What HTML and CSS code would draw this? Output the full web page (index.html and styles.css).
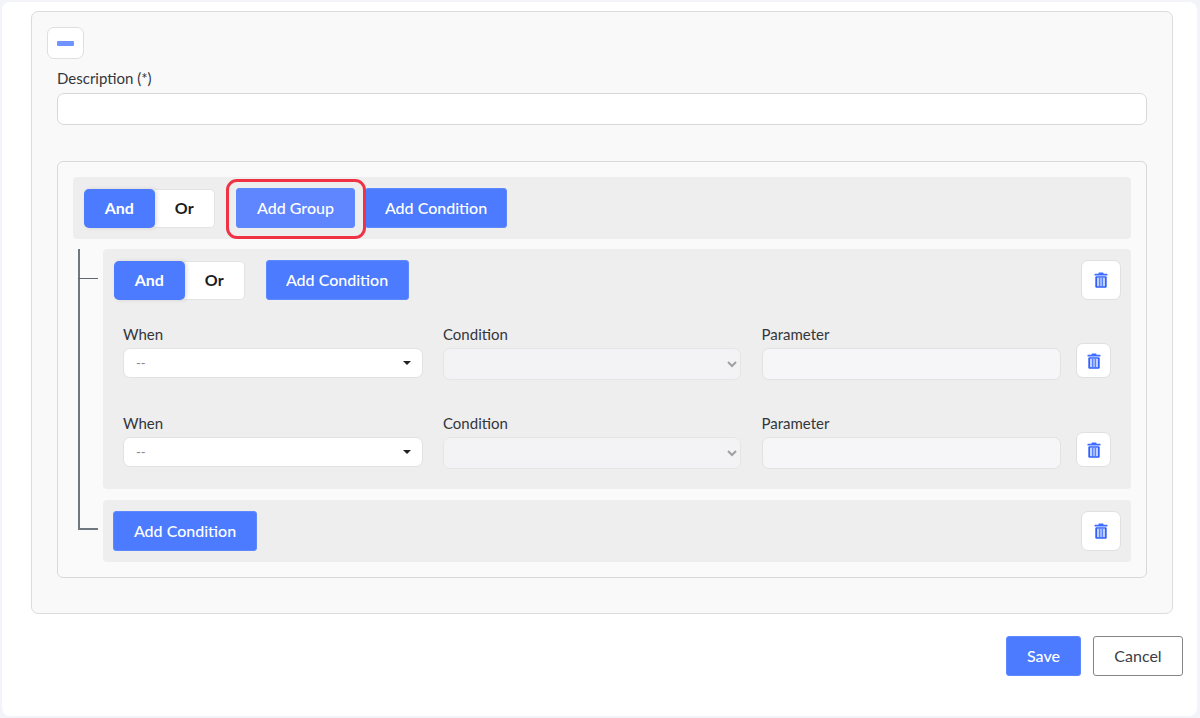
FILE: index.html
```html
<!DOCTYPE html>
<html lang="en">
<head>
<meta charset="utf-8">
<title>Rule editor</title>
<link rel="stylesheet" href="styles.css">
</head>
<body>
<svg class="sprite" width="0" height="0" aria-hidden="true">
  <symbol id="trash" viewBox="0 0 14 16">
    <rect x="4.500" y="0.400" width="5" height="1.800" rx=".6" fill="#3f6cff"/>
    <rect x="0.500" y="1.800" width="13" height="1.700" rx=".5" fill="#3f6cff"/>
    <rect x="1.300" y="4.300" width="11.400" height="11.400" rx="1.200" fill="#2f60ff"/>
    <rect x="3" y="5.600" width="8" height="8.600" fill="#c3d1ff"/>
    <rect x="5.100" y="5.600" width="1.200" height="8.600" fill="#4c78ff"/>
    <rect x="7.700" y="5.600" width="1.200" height="8.600" fill="#4c78ff"/>
  </symbol>
</svg>
<main class="card">
  <section class="panel">
    <button class="collapse" type="button" aria-label="Collapse"><span class="minus"></span></button>
    <div class="desc">
      <label class="label">Description (*)</label>
      <input class="text-input" type="text">
    </div>
    <div class="builder">
      <div class="bar bar-root">
        <div class="toggle"><button class="toggle-on" type="button">And</button><button class="toggle-off" type="button">Or</button></div>
        <span class="highlighted"><button class="btn btn-hover" type="button">Add Group</button><span class="ring"></span></span>
        <button class="btn btn-join" type="button">Add Condition</button>
      </div>
      <div class="children">
        <div class="group node">
          <div class="group-head">
            <div class="toggle"><button class="toggle-on" type="button">And</button><button class="toggle-off" type="button">Or</button></div>
            <button class="btn btn-tall" type="button">Add Condition</button>
            <button class="icon-btn push" type="button" aria-label="Delete"><svg class="ico"><use href="#trash"/></svg></button>
          </div>
          <div class="rule">
            <div class="field"><label class="label">When</label><div class="pick"><span>--</span><i class="caret"></i></div></div>
            <div class="field"><label class="label">Condition</label><select class="native" disabled><option></option></select></div>
            <div class="field"><label class="label">Parameter</label><input class="param" type="text" disabled></div>
            <button class="icon-btn small" type="button" aria-label="Delete"><svg class="ico"><use href="#trash"/></svg></button>
          </div>
          <div class="rule">
            <div class="field"><label class="label">When</label><div class="pick"><span>--</span><i class="caret"></i></div></div>
            <div class="field"><label class="label">Condition</label><select class="native" disabled><option></option></select></div>
            <div class="field"><label class="label">Parameter</label><input class="param" type="text" disabled></div>
            <button class="icon-btn small" type="button" aria-label="Delete"><svg class="ico"><use href="#trash"/></svg></button>
          </div>
        </div>
        <div class="group last node">
          <button class="btn btn-tall" type="button">Add Condition</button>
          <button class="icon-btn push" type="button" aria-label="Delete"><svg class="ico"><use href="#trash"/></svg></button>
        </div>
      </div>
    </div>
  </section>
  <footer class="actions">
    <button class="btn btn-save" type="button">Save</button>
    <button class="btn-cancel" type="button">Cancel</button>
  </footer>
</main>
</body>
</html>
```

FILE: styles.css
```css
* { box-sizing: border-box; }
html, body { margin: 0; height: 718px; overflow: hidden; }
body {
  background: #f3f4f9;
  font-family: Lato, "Liberation Sans", sans-serif;
  color: #2f3237;
  font-size: 15px;
  padding: 2px 3px 2px 2px;
}
button { font-family: inherit; cursor: pointer; }
.sprite { position: absolute; }

.card {
  height: 714px;
  background: #fff;
  border-radius: 8px;
  padding: 9px 14px 0 29px;
}
.panel {
  height: 603px;
  width: 1142px;
  background: #f9f9f9;
  border: 1px solid #dcdcdc;
  border-radius: 7px;
  padding: 15px 25px 0 15px;
}
.collapse {
  display: flex;
  align-items: center;
  justify-content: center;
  width: 37px;
  height: 32px;
  padding: 0;
  background: #fff;
  border: 1px solid #dfdfdf;
  border-radius: 7px;
}
.minus { display: block; width: 17px; height: 5px; background: #6f93ff; border-radius: 1px; }

.desc { margin: 10px 0 0 10px; }
.label { display: block; font-size: 15px; line-height: 18px; color: #33363b; }
.text-input {
  display: block;
  width: 1090px;
  height: 32px;
  margin-top: 6px;
  background: #fff;
  border: 1px solid #d8d8d8;
  border-radius: 7px;
}

.builder {
  width: 1090px;
  height: 417px;
  margin: 36px 0 0 10px;
  background: #fafafa;
  border: 1px solid #d9d9d9;
  border-radius: 6px;
  padding: 15px;
}
.bar-root {
  display: flex;
  align-items: center;
  height: 62px;
  padding: 0 11px;
  background: #eeeeee;
  border-radius: 4px;
}
.toggle { display: flex; height: 39px; flex: none; }
.toggle-on, .toggle-off {
  border: 0;
  font-size: 16px;
  font-weight: 700;
  padding: 0 0 1px;
}
.toggle-on {
  width: 70.500px;
  color: #fff;
  background: #4c7bff;
  border-radius: 5px;
  box-shadow: 2px 0 4px rgba(0, 0, 0, .12);
  position: relative;
}
.toggle-off {
  width: 60.500px;
  color: #1c1c1c;
  background: #fff;
  border: 1px solid #e3e3e3;
  border-left: 0;
  border-radius: 0 5px 5px 0;
}

.btn {
  height: 40px;
  padding: 0 20px 2px;
  color: #fff;
  font-size: 16px;
  font-weight: 500;
  background: #4c7bff;
  border: 1px solid #5f89ff;
  border-radius: 3px;
  white-space: nowrap;
}
.btn-hover { background: #5f85ff; width: 119px; padding: 0 0 2px; display: block; }
.highlighted { position: relative; margin-left: 21px; display: block; }
.ring {
  position: absolute;
  left: -10px;
  right: -11px;
  top: -9px;
  bottom: -11px;
  border: 3px solid #ef3344;
  border-radius: 11px;
  pointer-events: none;
}
.btn-join { width: 142px; padding: 0 0 2px; margin-left: 10px; }
.btn-tall { width: 144px; padding: 0 0 2px; flex: none; }

.children { margin: 10px 0 0 30px; position: relative; }
.children::before {
  content: "";
  position: absolute;
  left: -25px;
  top: 0;
  width: 2px;
  height: 281px;
  background: #6f7780;
}
.node { position: relative; }
.node::before {
  content: "";
  position: absolute;
  left: -25px;
  width: 20px;
  height: 1px;
  top: 29px;
  background: #5f6770;
}
.group.last.node::before { top: 28px; height: 2px; background: #6f7780; }
.group {
  background: #eeeeee;
  border-radius: 4px;
  padding: 11px 10px 0;
  height: 240px;
}
.group-head { display: flex; align-items: center; height: 40px; padding-left: 1px; }
.group-head .btn-tall { margin-left: 20.500px; width: 143px; }
.group.last {
  display: flex;
  align-items: center;
  height: 62px;
  margin-top: 11px;
  padding: 0 10px;
}
.icon-btn {
  display: flex;
  align-items: center;
  justify-content: center;
  width: 40px;
  height: 40px;
  flex: none;
  padding: 0;
  background: #fff;
  border: 1px solid #e0e0e0;
  border-radius: 7px;
}
.icon-btn.push { margin-left: auto; }
.icon-btn.small { width: 35px; height: 35px; margin: 18px 0 0 15px; }
.ico { width: 14px; height: 16px; display: block; }

.rule {
  display: flex;
  align-items: flex-start;
  height: 89px;
  padding: 0 0 0 10px;
}
.group-head + .rule { margin-top: 25px; }
.field { width: 300px; margin-right: 20px; flex: none; }
.field + .field { width: 298px; margin-right: 20.500px; }
.field:nth-child(3) { width: 299.500px; margin-right: 0; }
.pick {
  display: flex;
  align-items: center;
  justify-content: space-between;
  height: 30px;
  margin-top: 5px;
  padding: 0 11px 0 12px;
  color: #8a8a8a;
  font-size: 13px;
  background: #fff;
  border: 1px solid #e2e2e2;
  border-radius: 7px;
}
.caret {
  width: 0;
  height: 0;
  border-left: 4px solid transparent;
  border-right: 4px solid transparent;
  border-top: 4px solid #222;
}
.native, .param {
  display: block;
  width: 100%;
  height: 32px;
  margin-top: 5px;
  background-color: #f6f6f8;
  border: 1px solid #e2e2e2;
  border-radius: 7px;
  font-family: inherit;
}

.actions {
  display: flex;
  justify-content: flex-end;
  gap: 12px;
  margin-top: 22px;
}
.btn-save { width: 75px; padding: 0 0 2px; }
.btn-cancel {
  width: 90px;
  height: 40px;
  padding: 0 0 2px;
  color: #3b3f45;
  font-size: 16px;
  background: #fff;
  border: 1px solid #858585;
  border-radius: 3px;
}
```
